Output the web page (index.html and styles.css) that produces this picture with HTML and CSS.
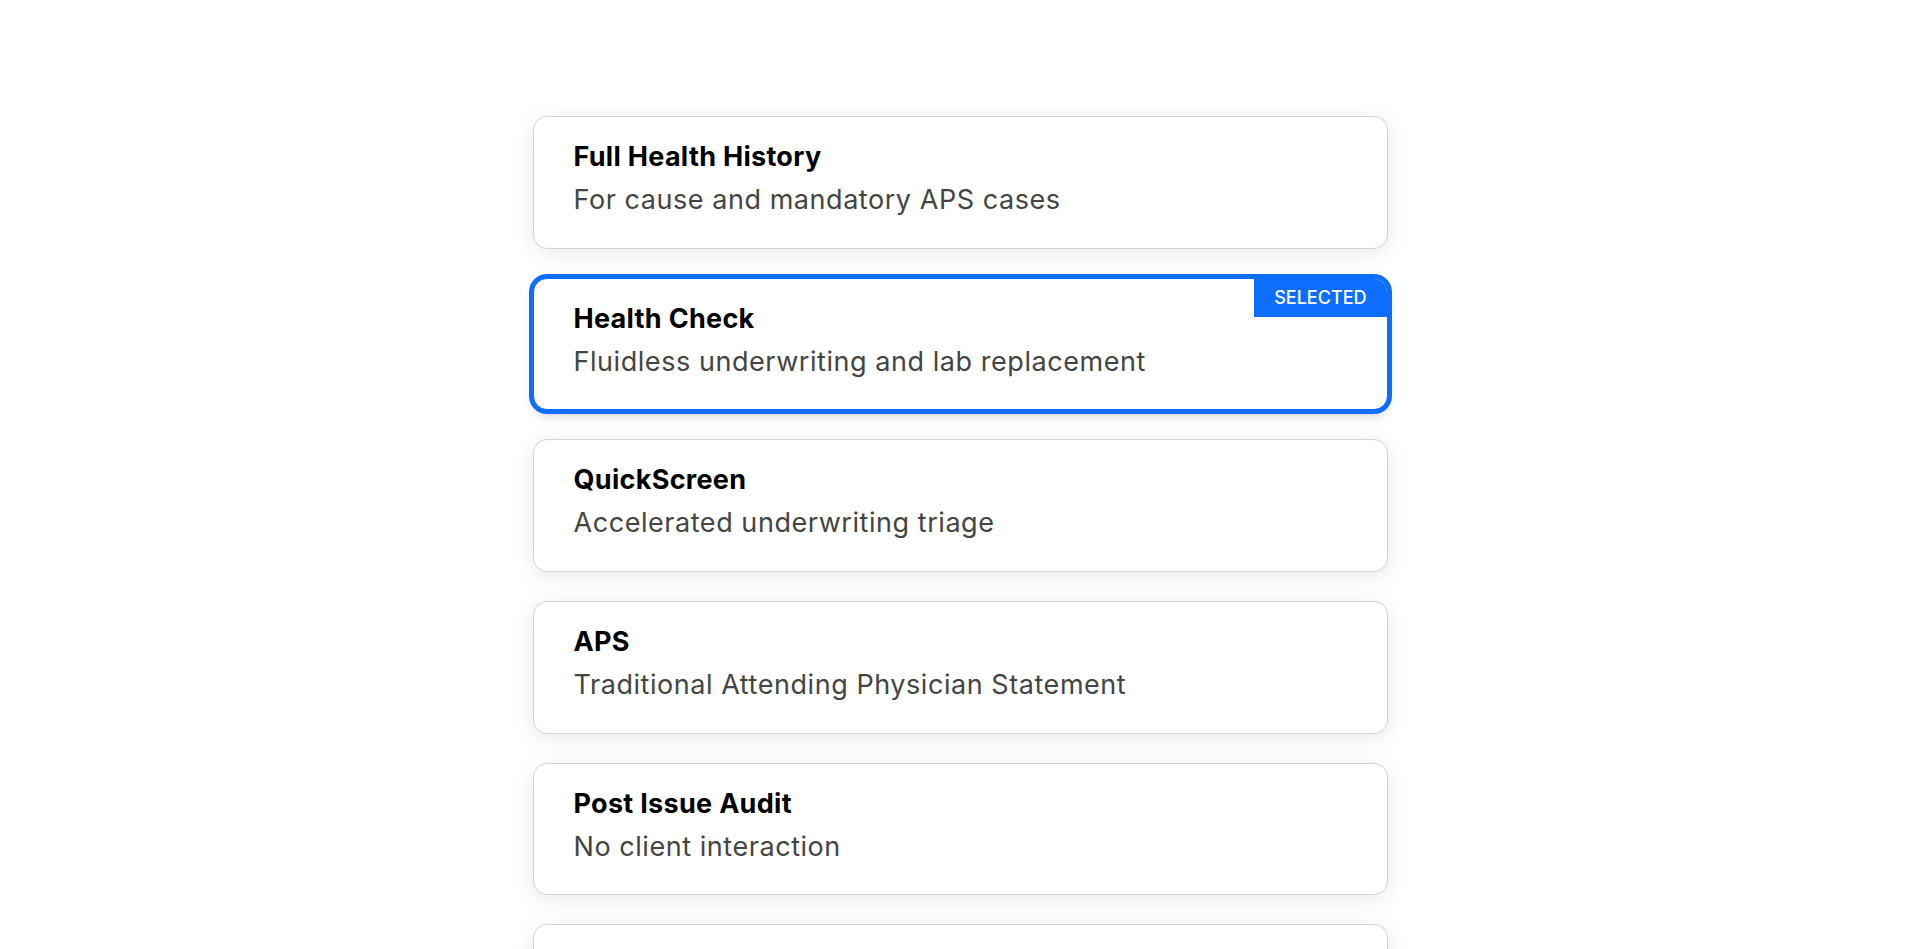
FILE: index.html
```html
<!DOCTYPE html>
<html lang="en">
<head>
<meta charset="UTF-8">
<meta name="viewport" content="width=device-width, initial-scale=1.0">
<title>Underwriting Options</title>
<link rel="stylesheet" href="styles.css">
</head>
<body>
<div class="option-list">
    <div class="option">
        <h2>Full Health History</h2>
        <p>For cause and mandatory APS cases</p>
    </div>
    <div class="option selected">
        <span class="badge">SELECTED</span>
        <h2>Health Check</h2>
        <p>Fluidless underwriting and lab replacement</p>
    </div>
    <div class="option">
        <h2>QuickScreen</h2>
        <p>Accelerated underwriting triage</p>
    </div>
    <div class="option">
        <h2>APS</h2>
        <p>Traditional Attending Physician Statement</p>
    </div>
    <div class="option">
        <h2>Post Issue Audit</h2>
        <p>No client interaction</p>
    </div>
    <div class="option">
        <h2>Paramedical Exam</h2>
        <p>In-person exam with fluids</p>
    </div>
</div>
</body>
</html>
```

FILE: styles.css
```css
body {
    font-family: Inter, 'Noto Sans', sans-serif;
    margin: 0;
    padding: 0;
    background-color: #fff;
}
.option-list {
    width: 855px;
    margin: 116px auto 40px;
    display: flex;
    flex-direction: column;
    gap: 29px;
}
.option {
    position: relative;
    box-sizing: border-box;
    height: 132.7px;
    padding: 22px 40px 0;
    background-color: #fff;
    border: 1px solid #d4d4d4;
    border-radius: 14px;
    box-shadow: 0 4px 22px rgba(0, 0, 0, 0.09);
    overflow: hidden;
}
.option h2 {
    margin: 0;
    font-size: 27px;
    line-height: 36px;
    font-weight: 700;
    letter-spacing: 0.3px;
    color: #000;
}
.option p {
    margin: 7px 0 0;
    font-size: 27px;
    line-height: 36px;
    font-weight: 400;
    letter-spacing: 0.55px;
    color: #444;
}
.option.selected {
    border-color: #0d6efd;
    box-shadow: 0 0 0 4px #0d6efd, 0 6px 10px rgba(0, 0, 0, 0.18);
}
.badge {
    position: absolute;
    top: 0;
    right: 0;
    height: 38px;
    padding: 0 20px;
    display: flex;
    align-items: center;
    background-color: #0d6efd;
    color: #fff;
    font-size: 18px;
    font-weight: 500;
}
```
